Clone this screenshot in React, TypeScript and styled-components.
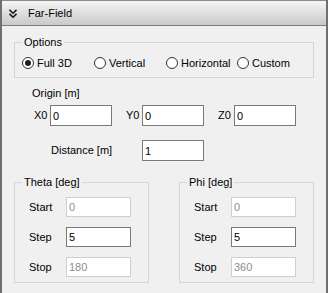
import React from 'react';
import styled, { createGlobalStyle } from 'styled-components';

const GlobalStyle = createGlobalStyle`
  body {
    margin: 0;
    font-family: "Liberation Sans", Arial, sans-serif;
    font-size: 11px;
    color: #000000;
  }
`;

const Panel = styled.div`
  width: 328px;
  height: 293px;
  box-sizing: border-box;
  border-left: 2px solid #6f6f6f;
  border-right: 2px solid #6f6f6f;
  background: #f0f0f0;
  display: flex;
  flex-direction: column;
  overflow: hidden;
`;

const Header = styled.div`
  height: 24px;
  border-top: 1px solid #8c8c8c;
  border-bottom: 1px solid #7b7b7b;
  background: linear-gradient(#f5f5f5, #c9c9c9);
  display: flex;
  flex-direction: row;
  align-items: center;
  padding-left: 7px;
  gap: 11px;
`;

const HeaderTitle = styled.div`
  font-size: 11px;
  line-height: 13px;
`;

const Body = styled.div`
  padding: 10px 12px 0;
  display: flex;
  flex-direction: column;
`;

const Group = styled.fieldset`
  margin: 0;
  min-width: 0;
  border: 1px solid #d5d5d5;
  padding: ${(p: { $pad: string }) => p.$pad};
`;

const Legend = styled.legend`
  padding: 0 2px;
  font-size: 11px;
  line-height: 13px;
`;

const RadioRow = styled.div`
  display: grid;
  grid-template-columns: 72px 72px 71px auto;
  height: 14px;
  align-items: center;
`;

const Radio = styled.label`
  display: flex;
  flex-direction: row;
  align-items: center;
  gap: 3px;
  line-height: 13px;
`;

const RadioCircle = styled.span<{ $checked?: boolean }>`
  width: 12px;
  height: 12px;
  box-sizing: border-box;
  border: 1px solid #333333;
  border-radius: 50%;
  background: #ffffff;
  display: flex;
  align-items: center;
  justify-content: center;
  &::after {
    content: '';
    width: 6px;
    height: 6px;
    border-radius: 50%;
    background: ${(p) => (p.$checked ? '#1f1f1f' : 'transparent')};
  }
`;

const SectionTitle = styled.div`
  margin-top: 9px;
  padding-left: 18px;
  line-height: 13px;
`;

const CoordRow = styled.div`
  margin-top: 5px;
  padding-left: 20px;
  display: flex;
  flex-direction: row;
  gap: 14px;
`;

const Coord = styled.div`
  display: grid;
  grid-template-columns: 16px 62px;
  align-items: center;
`;

const DistanceRow = styled.div`
  margin-top: 14px;
  padding-left: 37px;
  display: grid;
  grid-template-columns: 91px 62px;
  align-items: center;
`;

const Label = styled.span`
  line-height: 13px;
  white-space: nowrap;
`;

const Field = styled.input<{ $w: number; $h: number }>`
  width: ${(p) => p.$w}px;
  height: ${(p) => p.$h}px;
  box-sizing: border-box;
  border: 1px solid #7a7a7a;
  border-radius: 0;
  padding: 0 2px;
  margin: 0;
  background: #ffffff;
  font-family: "Liberation Sans", Arial, sans-serif;
  font-size: 11px;
  color: #000000;
  outline: none;
  &:disabled {
    border-color: #cfcfcf;
    color: #8d8d8d;
    background: #ffffff;
  }
`;

const AngleGrid = styled.div`
  margin-top: 15px;
  display: flex;
  flex-direction: row;
  justify-content: space-between;
`;

const AngleGroup = styled(Group)`
  width: 135px;
  box-sizing: border-box;
`;

const AngleRows = styled.div`
  padding-left: 7px;
  display: grid;
  grid-template-columns: 37px 65px;
  row-gap: 10px;
  align-items: center;
`;

const Chevrons = () => (
  <svg width="8" height="9" viewBox="0 0 8 9">
    <path d="M0.5 0.8 L4 4.2 L7.5 0.8" fill="none" stroke="#1a1a1a" strokeWidth="1.6" />
    <path d="M0.5 4.8 L4 8.2 L7.5 4.8" fill="none" stroke="#1a1a1a" strokeWidth="1.6" />
  </svg>
);

const AngleBox: React.FC<{ title: string; stop: string }> = ({ title, stop }) => (
  <AngleGroup $pad="8px 0 5px 7px">
    <Legend>{title}</Legend>
    <AngleRows>
      <Label>Start</Label>
      <Field $w={65} $h={20} defaultValue="0" disabled />
      <Label>Step</Label>
      <Field $w={65} $h={20} defaultValue="5" />
      <Label>Stop</Label>
      <Field $w={65} $h={20} defaultValue={stop} disabled />
    </AngleRows>
  </AngleGroup>
);

const App: React.FC = () => {
  const options = ['Full 3D', 'Vertical', 'Horizontal', 'Custom'];

  return (
    <>
      <GlobalStyle />
      <Panel>
        <Header>
          <Chevrons />
          <HeaderTitle>Far-Field</HeaderTitle>
        </Header>
        <Body>
          <Group $pad="7px 0 7px 7px">
            <Legend>Options</Legend>
            <RadioRow>
              {options.map((o, i) => (
                <Radio key={o}>
                  <RadioCircle $checked={i === 0} />
                  {o}
                </Radio>
              ))}
            </RadioRow>
          </Group>
          <SectionTitle>Origin [m]</SectionTitle>
          <CoordRow>
            <Coord>
              <Label>X0</Label>
              <Field $w={62} $h={21} defaultValue="0" />
            </Coord>
            <Coord>
              <Label>Y0</Label>
              <Field $w={62} $h={21} defaultValue="0" />
            </Coord>
            <Coord>
              <Label>Z0</Label>
              <Field $w={62} $h={21} defaultValue="0" />
            </Coord>
          </CoordRow>
          <DistanceRow>
            <Label>Distance [m]</Label>
            <Field $w={62} $h={21} defaultValue="1" />
          </DistanceRow>
          <AngleGrid>
            <AngleBox title="Theta [deg]" stop="180" />
            <AngleBox title="Phi [deg]" stop="360" />
          </AngleGrid>
        </Body>
      </Panel>
    </>
  );
};

export default App;
